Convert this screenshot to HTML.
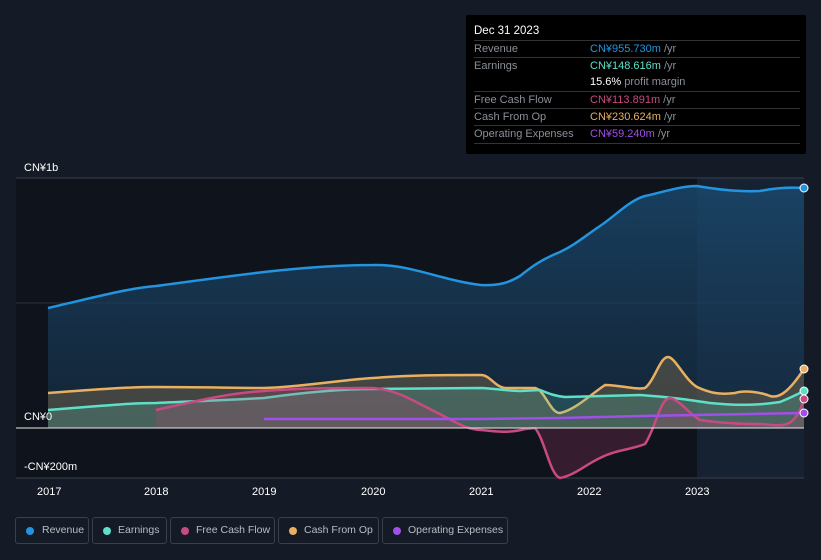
<!DOCTYPE html>
<html><head><meta charset="utf-8"><style>
body{margin:0;width:821px;height:560px;background:#151b26;font-family:"Liberation Sans",sans-serif;overflow:hidden;position:relative}
.tt{position:absolute;left:466px;top:15px;width:340px;height:139px;background:#000;border-radius:2px;font-size:11px}
.tt .h{color:#fff;font-size:11.5px;position:absolute;left:8px;top:10px}
.row{position:absolute;left:8px;width:326px;height:17px;border-top:1px solid #333;color:#8a8f98}
.row span{position:absolute;left:116px;top:2px;white-space:nowrap}
.row .l{left:0}
.leg{position:absolute;top:517px;height:27px;border:1px solid #3a404b;border-radius:3px;color:#b8bcc4;font-size:10.5px;box-sizing:border-box;line-height:25px;white-space:nowrap}
.leg i{position:absolute;left:10px;top:9px;width:8px;height:8px;border-radius:50%}
.leg b{font-weight:normal;position:absolute;left:25px}
</style></head><body>
<svg width="821" height="560" style="position:absolute;left:0;top:0">
<defs><linearGradient id="rg" x1="0" y1="0" x2="0" y2="1"><stop offset="0" stop-color="#1a4a70" stop-opacity=".8"/><stop offset="1" stop-color="#163048" stop-opacity=".6"/></linearGradient></defs>
<rect x="16" y="178" width="788" height="300" fill="#0f131b"/>
<rect x="697" y="178" width="107" height="300" fill="#1a2a3c" opacity=".7"/>
<line x1="16" y1="178" x2="804" y2="178" fill="none" stroke="#3a404b"/>
<line x1="16" y1="303" x2="804" y2="303" stroke="#2a3340"/>
<line x1="16" y1="478" x2="804" y2="478" stroke="#3a404b"/>
<path d="M48,308 C100,296 130,288 156,286 C200,280 230,276 264,272 C300,268 340,265 373,265 C410,264 440,280 481,285 C500,286 510,282 520,276 C530,268 540,260 560,252 C575,245 585,236 600,226 C615,216 630,200 645,196 C660,193 680,186 697,186 C720,190 740,192 760,191 C775,188 790,187 804,188 L804,428 L48,428Z" fill="url(#rg)"/>
<path d="M48,308 C100,296 130,288 156,286 C200,280 230,276 264,272 C300,268 340,265 373,265 C410,264 440,280 481,285 C500,286 510,282 520,276 C530,268 540,260 560,252 C575,245 585,236 600,226 C615,216 630,200 645,196 C660,193 680,186 697,186 C720,190 740,192 760,191 C775,188 790,187 804,188" fill="none" stroke="#2394df" stroke-width="2.5"/>
<path d="M48,393 C100,389 130,387 156,387 C200,387 230,388 264,388 C300,387 340,380 373,378 C410,375 440,375 481,375 C490,375 495,387 505,388 L535,388 C545,390 550,413 560,413 C575,410 590,395 605,385 C620,385 635,390 645,388 C655,380 660,357 668,357 C675,357 685,380 697,387 C710,393 720,395 735,393 C745,390 760,392 770,396 C780,399 790,390 804,369 L804,428 L48,428Z" fill="#e8b060" fill-opacity=".22"/>
<path d="M48,393 C100,389 130,387 156,387 C200,387 230,388 264,388 C300,387 340,380 373,378 C410,375 440,375 481,375 C490,375 495,387 505,388 L535,388 C545,390 550,413 560,413 C575,410 590,395 605,385 C620,385 635,390 645,388 C655,380 660,357 668,357 C675,357 685,380 697,387 C710,393 720,395 735,393 C745,390 760,392 770,396 C780,399 790,390 804,369" fill="none" stroke="#e8b060" stroke-width="2.5"/>
<path d="M48,410 C100,406 130,403 156,403 C200,401 230,400 264,398 C300,393 340,389 373,389 L481,388 C500,389 510,391 520,391 L540,390 C550,394 555,396 565,397 L640,395 C670,397 690,400 710,403 C740,406 760,405 780,402 C790,398 800,393 804,391 L804,428 L48,428Z" fill="#5ee0c8" fill-opacity=".2"/>
<path d="M48,410 C100,406 130,403 156,403 C200,401 230,400 264,398 C300,393 340,389 373,389 L481,388 C500,389 510,391 520,391 L540,390 C550,394 555,396 565,397 L640,395 C670,397 690,400 710,403 C740,406 760,405 780,402 C790,398 800,393 804,391" fill="none" stroke="#5ee0c8" stroke-width="2.5"/>
<path d="M156,410 C200,400 230,393 264,391 C300,388 340,388 373,388 C400,390 420,405 440,414 C460,425 470,430 481,430 C500,432 510,433 525,429 L535,428 C545,440 550,475 560,478 C575,475 585,465 600,458 C615,450 630,450 645,444 C655,430 660,398 670,398 C680,400 690,415 700,420 C720,423 740,424 760,424 C780,425 790,430 800,410 L804,399 L804,428 L156,428Z" fill="#c04070" fill-opacity=".22"/>
<path d="M156,410 C200,400 230,393 264,391 C300,388 340,388 373,388 C400,390 420,405 440,414 C460,425 470,430 481,430 C500,432 510,433 525,429 L535,428 C545,440 550,475 560,478 C575,475 585,465 600,458 C615,450 630,450 645,444 C655,430 660,398 670,398 C680,400 690,415 700,420 C720,423 740,424 760,424 C780,425 790,430 800,410 L804,399" fill="none" stroke="#c84a82" stroke-width="2.5"/>
<path d="M264,419 L481,419 L560,418 L640,416 L697,415 L804,413" fill="none" stroke="#a050e8" stroke-width="2.5"/>
<line x1="16" y1="428" x2="804" y2="428" stroke="#e8e8e8" stroke-width="1"/>
<circle cx="804" cy="188" r="4" fill="#2394df" stroke="#fff"/>
<circle cx="804" cy="369" r="4" fill="#e8b060" stroke="#fff"/>
<circle cx="804" cy="391" r="4" fill="#5ee0c8" stroke="#fff"/>
<circle cx="804" cy="399" r="4" fill="#c84a82" stroke="#fff"/>
<circle cx="804" cy="413" r="4" fill="#a050e8" stroke="#fff"/>
<g fill="#fff" font-size="11" font-family="Liberation Sans">
<text x="24" y="171">CN¥1b</text><text x="24" y="420">CN¥0</text><text x="24" y="470">-CN¥200m</text>
<text x="37" y="495">2017</text><text x="144" y="495">2018</text><text x="252" y="495">2019</text><text x="361" y="495">2020</text><text x="469" y="495">2021</text><text x="577" y="495">2022</text><text x="685" y="495">2023</text>
</g>
</svg>
<div class="tt"><div class="h">Dec 31 2023</div>
<div class="row" style="top:25px"><span class="l">Revenue</span><span style="color:#2394df">CN¥955.730m <span style="position:static;color:#8a8f98">/yr</span></span></div>
<div class="row" style="top:42px"><span class="l">Earnings</span><span style="color:#5ee0c8">CN¥148.616m <span style="position:static;color:#8a8f98">/yr</span></span></div>
<div class="row" style="top:59px;border:0"><span style="color:#fff">15.6% <span style="position:static;color:#8a8f98">profit margin</span></span></div>
<div class="row" style="top:76px"><span class="l">Free Cash Flow</span><span style="color:#c84a82">CN¥113.891m <span style="position:static;color:#8a8f98">/yr</span></span></div>
<div class="row" style="top:93px"><span class="l">Cash From Op</span><span style="color:#e8b060">CN¥230.624m <span style="position:static;color:#8a8f98">/yr</span></span></div>
<div class="row" style="top:110px"><span class="l">Operating Expenses</span><span style="color:#a050e8">CN¥59.240m <span style="position:static;color:#8a8f98">/yr</span></span></div>
<div class="row" style="top:128px;height:0"></div>
</div>
<div class="leg" style="left:15px;width:74px"><i style="background:#2394df"></i><b style="left:26px">Revenue</b></div>
<div class="leg" style="left:92px;width:75px"><i style="background:#5ee0c8"></i><b style="left:25px">Earnings</b></div>
<div class="leg" style="left:170px;width:105px"><i style="background:#c84a82"></i><b>Free Cash Flow</b></div>
<div class="leg" style="left:278px;width:101px"><i style="background:#e8b060"></i><b>Cash From Op</b></div>
<div class="leg" style="left:382px;width:126px"><i style="background:#a050e8"></i><b>Operating Expenses</b></div>
</body></html>
